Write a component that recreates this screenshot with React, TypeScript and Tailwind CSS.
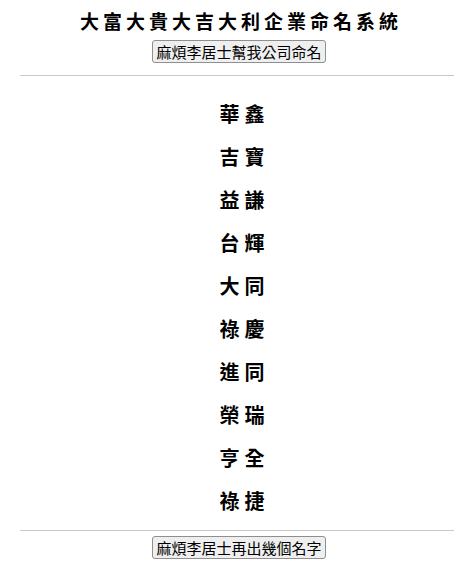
import React from 'react';

const names: string[] = ['華鑫', '吉寶', '益謙', '台輝', '大同', '祿慶', '進同', '榮瑞', '亨全', '祿捷'];

const cjk = { fontFamily: '"Noto Sans CJK TC", "Noto Sans CJK SC", sans-serif' };

const App: React.FC = () => {
    return (
        <div className="w-[474px] bg-white text-black" style={cjk}>
            <div className="flex flex-col items-center pt-[8px]">
                <h1 className="text-[19px] leading-[26px] font-bold tracking-[4px] pl-[8px]">大富大貴大吉大利企業命名系統</h1>
                <button className="mt-[6px] ml-[4px] h-[23px] px-[3px] text-[15px] leading-[18px] bg-[#efefef] border border-[#8f8f8f] rounded-[3px]">
                    麻煩李居士幫我公司命名
                </button>
            </div>
            <hr className="mx-[20px] mt-[12px] border-t border-[#c8c8c8]" />
            <div className="flex flex-col items-center pt-[24px]">
                {names.map((name) => (
                    <div key={name} className="h-[43px] text-[20px] leading-[28px] font-bold tracking-[5px] pl-[15px]">
                        {name}
                    </div>
                ))}
            </div>
            <hr className="mx-[20px] border-t border-[#c8c8c8]" />
            <div className="flex justify-center pt-[5px] pb-[9px]">
                <button className="ml-[4px] h-[23px] px-[3px] text-[15px] leading-[18px] bg-[#efefef] border border-[#8f8f8f] rounded-[3px]">
                    麻煩李居士再出幾個名字
                </button>
            </div>
        </div>
    );
};

export default App;
